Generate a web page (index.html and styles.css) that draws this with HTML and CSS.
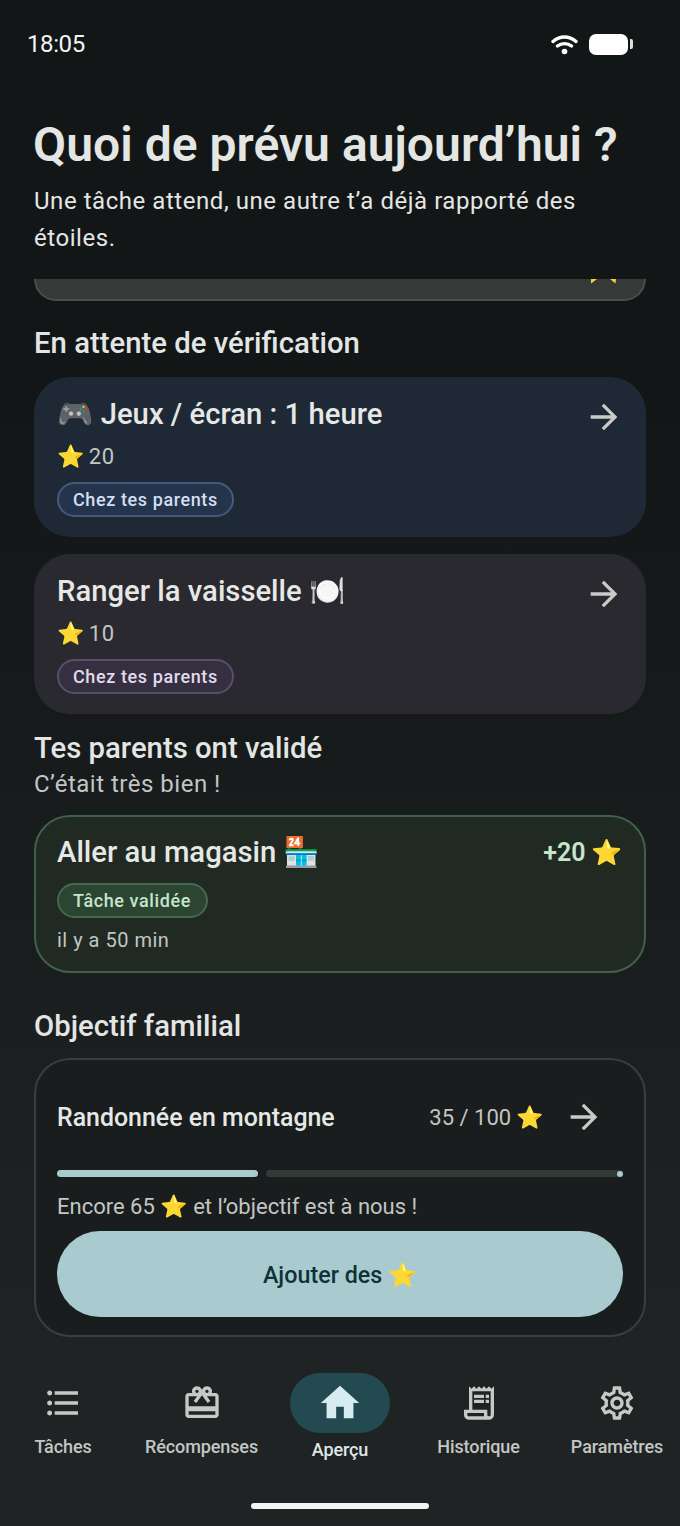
FILE: index.html
```html
<!DOCTYPE html>
<html lang="fr">
<head>
<meta charset="utf-8">
<title>Aperçu</title>
<link rel="stylesheet" href="styles.css">
</head>
<body>
<div class="app">
  <div class="status">
    <span class="time">18:05</span>
    <div class="status-icons">
      <svg class="wifi" viewBox="0 0 27 22" width="27" height="22"><path d="M2 8.500C9 2.500 18 2.500 25 8.500M6.500 13C10.500 9.800 16.500 9.800 20.500 13" fill="none" stroke="#fff" stroke-width="3.400" stroke-linecap="round"/><circle cx="13.500" cy="18.500" r="2.800" fill="#fff"/></svg>
      <div class="battery"></div>
      <div class="battery-nub"></div>
    </div>
  </div>
  <header class="head">
    <h1>Quoi de prévu aujourd’hui ?</h1>
    <p>Une tâche attend, une autre t’a déjà rapporté des étoiles.</p>
  </header>
  <main class="scroll">
    <div class="peek"><svg class="peek-tips" viewBox="0 0 30 5" width="30" height="5"><path d="M3 0h6L3 4.500zM22 0h6l-.5 4.500z" fill="#f4d331"/></svg></div>
    <h2 class="sec first">En attente de vérification</h2>
    <article class="task blue">
      <div class="task-main">
        <h3>🎮 Jeux / écran : 1 heure</h3>
        <div class="stars">⭐ 20</div>
        <span class="chip chip-blue">Chez tes parents</span>
      </div>
      <svg class="arrow" viewBox="0 0 24 24"><path d="M12 4l-1.410 1.410L16.170 11H4v2h12.170l-5.580 5.590L12 20l8-8z"/></svg>
    </article>
    <article class="task plum">
      <div class="task-main">
        <h3>Ranger la vaisselle 🍽️</h3>
        <div class="stars">⭐ 10</div>
        <span class="chip chip-plum">Chez tes parents</span>
      </div>
      <svg class="arrow" viewBox="0 0 24 24"><path d="M12 4l-1.410 1.410L16.170 11H4v2h12.170l-5.580 5.590L12 20l8-8z"/></svg>
    </article>
    <h2 class="sec second">Tes parents ont validé</h2>
    <p class="sub">C’était très bien !</p>
    <article class="done">
      <div class="done-top">
        <h3>Aller au magasin 🏪</h3>
        <span class="gain">+20 ⭐</span>
      </div>
      <span class="chip chip-green">Tâche validée</span>
      <div class="ago">il y a 50 min</div>
    </article>
    <h2 class="sec third">Objectif familial</h2>
    <article class="goal">
      <div class="goal-top">
        <span class="goal-name">Randonnée en montagne</span>
        <span class="goal-count">35 / 100 ⭐</span>
        <svg class="arrow" viewBox="0 0 24 24"><path d="M12 4l-1.410 1.410L16.170 11H4v2h12.170l-5.580 5.590L12 20l8-8z"/></svg>
      </div>
      <div class="progress">
        <div class="fill" style="width:201px"></div>
        <div class="track"><span class="dot"></span></div>
      </div>
      <p class="goal-note">Encore 65 ⭐ et l’objectif est à nous !</p>
      <button class="cta">Ajouter des ⭐</button>
    </article>
  </main>
  <nav class="nav">
    <div class="nav-item">
      <div class="ico"><svg viewBox="0 0 24 24"><path d="M4 10.500c-.830 0-1.500.670-1.500 1.500s.670 1.500 1.500 1.500 1.500-.670 1.500-1.500-.670-1.500-1.500-1.500zm0-6c-.830 0-1.500.670-1.500 1.500S3.170 7.500 4 7.500 5.500 6.830 5.500 6 4.830 4.500 4 4.500zm0 12c-.830 0-1.500.680-1.500 1.500s.680 1.500 1.500 1.500 1.500-.680 1.500-1.500-.670-1.500-1.500-1.500zM7 19h14v-2H7v2zm0-6h14v-2H7v2zm0-8v2h14V5H7z"/></svg></div>
      <span>Tâches</span>
    </div>
    <div class="nav-item">
      <div class="ico"><svg viewBox="0 0 24 24"><path d="M20 6h-2.180c.110-.310.180-.650.180-1 0-1.660-1.340-3-3-3-1.050 0-1.960.540-2.500 1.350l-.500.670-.500-.680C10.960 2.540 10.050 2 9 2 7.340 2 6 3.340 6 5c0 .350.070.690.180 1H4c-1.110 0-1.990.890-1.990 2L2 19c0 1.110.890 2 2 2h16c1.110 0 2-.890 2-2V8c0-1.110-.890-2-2-2zm-5-2c.550 0 1 .450 1 1s-.450 1-1 1-1-.450-1-1 .450-1 1-1zM9 4c.550 0 1 .450 1 1s-.450 1-1 1-1-.450-1-1 .450-1 1-1zm11 15H4v-2h16v2zm0-5H4V8h5.080L7 10.830 8.620 12 11 8.760l1-1.360 1 1.360L15.380 12 17 10.830 14.920 8H20v6z"/></svg></div>
      <span>Récompenses</span>
    </div>
    <div class="nav-item active">
      <div class="pill"><svg viewBox="0 0 24 24"><path d="M10 20v-6h4v6h5v-8h3L12 3 2 12h3v8z"/></svg></div>
      <span>Aperçu</span>
    </div>
    <div class="nav-item">
      <div class="ico"><svg viewBox="0 0 24 24"><path d="M19.500 3.500 18 2l-1.500 1.500L15 2l-1.500 1.500L12 2l-1.500 1.500L9 2 7.500 3.500 6 2v14H3v3c0 1.660 1.340 3 3 3h12c1.660 0 3-1.340 3-3V2l-1.500 1.500zM15 20H6c-.550 0-1-.450-1-1v-1h10v3zm4-1c0 .550-.450 1-1 1s-1-.450-1-1v-3H8V5h11v14z"/><path d="M9 7h6v2H9zm7 0h2v2h-2zm-7 3h6v2H9zm7 0h2v2h-2z"/></svg></div>
      <span>Historique</span>
    </div>
    <div class="nav-item">
      <div class="ico"><svg viewBox="0 0 24 24"><path d="M19.430 12.980c.040-.320.070-.640.070-.980 0-.340-.030-.660-.070-.980l2.110-1.650c.190-.150.240-.420.120-.640l-2-3.460c-.090-.160-.260-.250-.440-.250-.060 0-.120.010-.170.030l-2.490 1c-.520-.400-1.080-.730-1.690-.980l-.380-2.650C14.460 2.180 14.250 2 14 2h-4c-.250 0-.460.180-.490.420l-.380 2.650c-.610.250-1.170.590-1.690.980l-2.490-1c-.060-.020-.120-.030-.180-.030-.170 0-.340.090-.430.250l-2 3.460c-.130.220-.070.490.120.640l2.110 1.650c-.040.320-.070.650-.070.980 0 .330.030.660.070.980l-2.110 1.650c-.190.150-.240.420-.120.640l2 3.460c.090.160.260.250.440.250.060 0 .120-.010.170-.030l2.490-1c.520.400 1.080.730 1.690.980l.380 2.650c.030.240.240.420.490.420h4c.250 0 .460-.180.490-.420l.380-2.650c.610-.250 1.170-.590 1.690-.980l2.490 1c.060.020.120.030.180.030.170 0 .340-.090.430-.250l2-3.460c.120-.220.070-.490-.120-.640l-2.110-1.650zm-1.980-1.710c.040.310.050.520.050.730 0 .210-.020.430-.050.730l-.140 1.130.890.700 1.080.840-.700 1.210-1.270-.510-1.040-.420-.900.680c-.430.320-.840.560-1.250.730l-1.060.43-.160 1.130-.200 1.350h-1.400l-.190-1.350-.160-1.130-1.060-.43c-.430-.180-.830-.410-1.230-.71l-.910-.700-1.060.43-1.270.51-.700-1.210 1.080-.84.890-.700-.140-1.130c-.030-.310-.050-.540-.050-.740s.020-.430.050-.730l.140-1.130-.890-.700-1.080-.84.700-1.210 1.270.510 1.040.420.900-.680c.430-.320.840-.560 1.250-.730l1.060-.43.160-1.130.200-1.350h1.390l.190 1.350.160 1.130 1.060.43c.430.180.830.410 1.230.710l.910.700 1.060-.43 1.270-.510.700 1.210-1.070.85-.890.700.140 1.130zM12 8c-2.210 0-4 1.790-4 4s1.790 4 4 4 4-1.790 4-4-1.790-4-4-4zm0 6c-1.100 0-2-.900-2-2s.900-2 2-2 2 .900 2 2-.900 2-2 2z"/></svg></div>
      <span>Paramètres</span>
    </div>
  </nav>
  <div class="home-bar"><div class="home-ind"></div></div>
</div>
</body>
</html>
```

FILE: styles.css
```css
* { box-sizing: border-box; margin: 0; padding: 0; }
html, body { width: 680px; height: 1526px; overflow: hidden; }
body { font-family: Roboto, "Noto Color Emoji", sans-serif; color: #e3e6e4; background: #131717; }
.app { width: 680px; height: 1526px; display: flex; flex-direction: column; background: linear-gradient(180deg, #121616 0%, #121616 25%, #1f2323 90%, #1f2323 100%); }

.status { height: 88px; flex: none; padding: 0 47px 0 27px; display: flex; align-items: center; justify-content: space-between; }
.time { font-size: 24px; letter-spacing: -.4px; color: #f2f4f3; }
.status-icons { display: flex; align-items: center; }
.wifi { margin-right: 11px; }
.battery { width: 39px; height: 21px; border-radius: 7px; background: #fff; }
.battery-nub { width: 3px; height: 10px; margin-left: 2px; border-radius: 0 2px 2px 0; background: #ddd; }

.head { height: 191px; flex: none; padding: 28px 34px 0; }
.head h1 { font-size: 48px; line-height: 58px; font-weight: 600; color: #e3e6e2; margin-left: -1px; letter-spacing: .04px; }
.head p { font-size: 24px; line-height: 37px; letter-spacing: .55px; color: #e3e6e4; margin-top: 9px; }

.scroll { flex: 1; min-height: 0; padding: 0 34px; overflow: hidden; display: flex; flex-direction: column; }
.peek { height: 22px; flex: none; overflow: hidden; display: flex; justify-content: flex-end; border: 2px solid #4a4e4c; border-top: 0; border-radius: 0 0 30px 30px; background: #353938; padding-right: 26px; }
.peek-tips { flex: none; }

.sec { font-size: 29.300px; line-height: 36px; font-weight: 500; color: #e3e6e4; flex: none; }
.sec.first { margin-top: 24px; margin-bottom: 16px; }
.sec.second { margin-top: 0; }
.sec.third { margin-top: 35px; margin-bottom: 14px; }
.sub { font-size: 24px; line-height: 36px; letter-spacing: .5px; color: #c2c6c4; flex: none; margin-bottom: 13px; }

.task { flex: none; height: 160px; border-radius: 36px; padding: 19px 22px 0 23px; display: flex; justify-content: space-between; margin-bottom: 17px; }
.task.blue { background: #1e2935; }
.task.plum { background: #2a292f; margin-bottom: 16px; }
.task h3, .done h3 { font-size: 29.250px; line-height: 36px; font-weight: 500; color: #e6e8e6; }
.stars { font-size: 22px; line-height: 32px; letter-spacing: .5px; word-spacing: -2px; color: #c2c6c4; margin-top: 9px; }
.chip { display: inline-block; height: 35px; line-height: 31px; border-radius: 18px; border: 2px solid; padding: 0 14px; font-size: 18px; font-weight: 500; letter-spacing: .6px; margin-top: 9px; }
.chip-blue { background: #24344d; border-color: #47597c; color: #d3dff0; }
.chip-plum { background: #352f41; border-color: #57506a; color: #e0dcea; }
.chip-green { background: #2b4532; border-color: #44694f; color: #c6e5cd; margin-top: 0; padding: 0 15px 0 14px; }
.arrow { width: 40px; height: 40px; fill: #c9cbc9; flex: none; margin-top: 1px; }

.done { flex: none; height: 158px; border-radius: 36px; border: 2px solid #41604a; background: #202a23; padding: 17px 21px 0 21px; }
.done-top { display: flex; justify-content: space-between; align-items: center; margin-bottom: 13px; }
.gain { font-size: 25px; font-weight: 600; color: #c6e5cd; }
.ago { font-size: 20px; line-height: 28px; letter-spacing: .5px; color: #c2c6c4; margin-top: 8px; }

.goal { flex: none; height: 279px; border-radius: 36px; border: 2px solid #3a3e3e; background: #191d1d; padding: 0 21px; }
.goal-top { height: 114px; display: flex; align-items: center; }
.goal-name { font-size: 24.900px; font-weight: 500; color: #e6e8e6; flex: 1; }
.goal-count { font-size: 22px; color: #c2c6c4; margin-right: 20px; }
.goal-top .arrow { margin: 0 19px 0 0; }
.progress { height: 7px; display: flex; gap: 8px; margin-top: -4px; }
.fill { height: 7px; background: #a9cbd0; border-radius: 4px; flex: none; }
.track { flex: 1; height: 7px; background: #323a38; border-radius: 4px; display: flex; justify-content: flex-end; }
.dot { width: 6px; height: 6px; border-radius: 50%; background: #a9cbd0; margin-top: .5px; }
.goal-note { font-size: 22px; line-height: 32px; color: #c2c6c4; margin-top: 14px; }
.cta { display: block; width: 100%; height: 86px; margin-top: 8px; padding-top: 2px; border: 0; border-radius: 43px; background: #a9cbd0; color: #0e3237; font: 500 23.300px Roboto, "Noto Color Emoji", sans-serif; }

.nav { height: 135px; flex: none; padding: 18px 13px 0; display: flex; justify-content: space-between; }
.nav-item { width: 100px; display: flex; flex-direction: column; align-items: center; font-size: 18px; font-weight: 500; letter-spacing: -.1px; color: #c2c6c4; white-space: nowrap; }
.ico { height: 60px; display: flex; align-items: center; justify-content: center; }
.ico svg { width: 40px; height: 40px; fill: #c7c9c7; }
.nav-item span { line-height: 28px; }
.pill { width: 100px; height: 60px; flex: none; border-radius: 30px; background: #234a50; display: flex; align-items: center; justify-content: center; }
.pill svg { width: 46px; height: 46px; fill: #d6ecf1; }
.active span { color: #dfe6e6; margin-top: 3px; }
.home-bar { height: 36px; flex: none; padding-top: 13px; display: flex; justify-content: center; }
.home-ind { width: 178px; height: 6px; border-radius: 3px; background: #f2f4f3; }
```
